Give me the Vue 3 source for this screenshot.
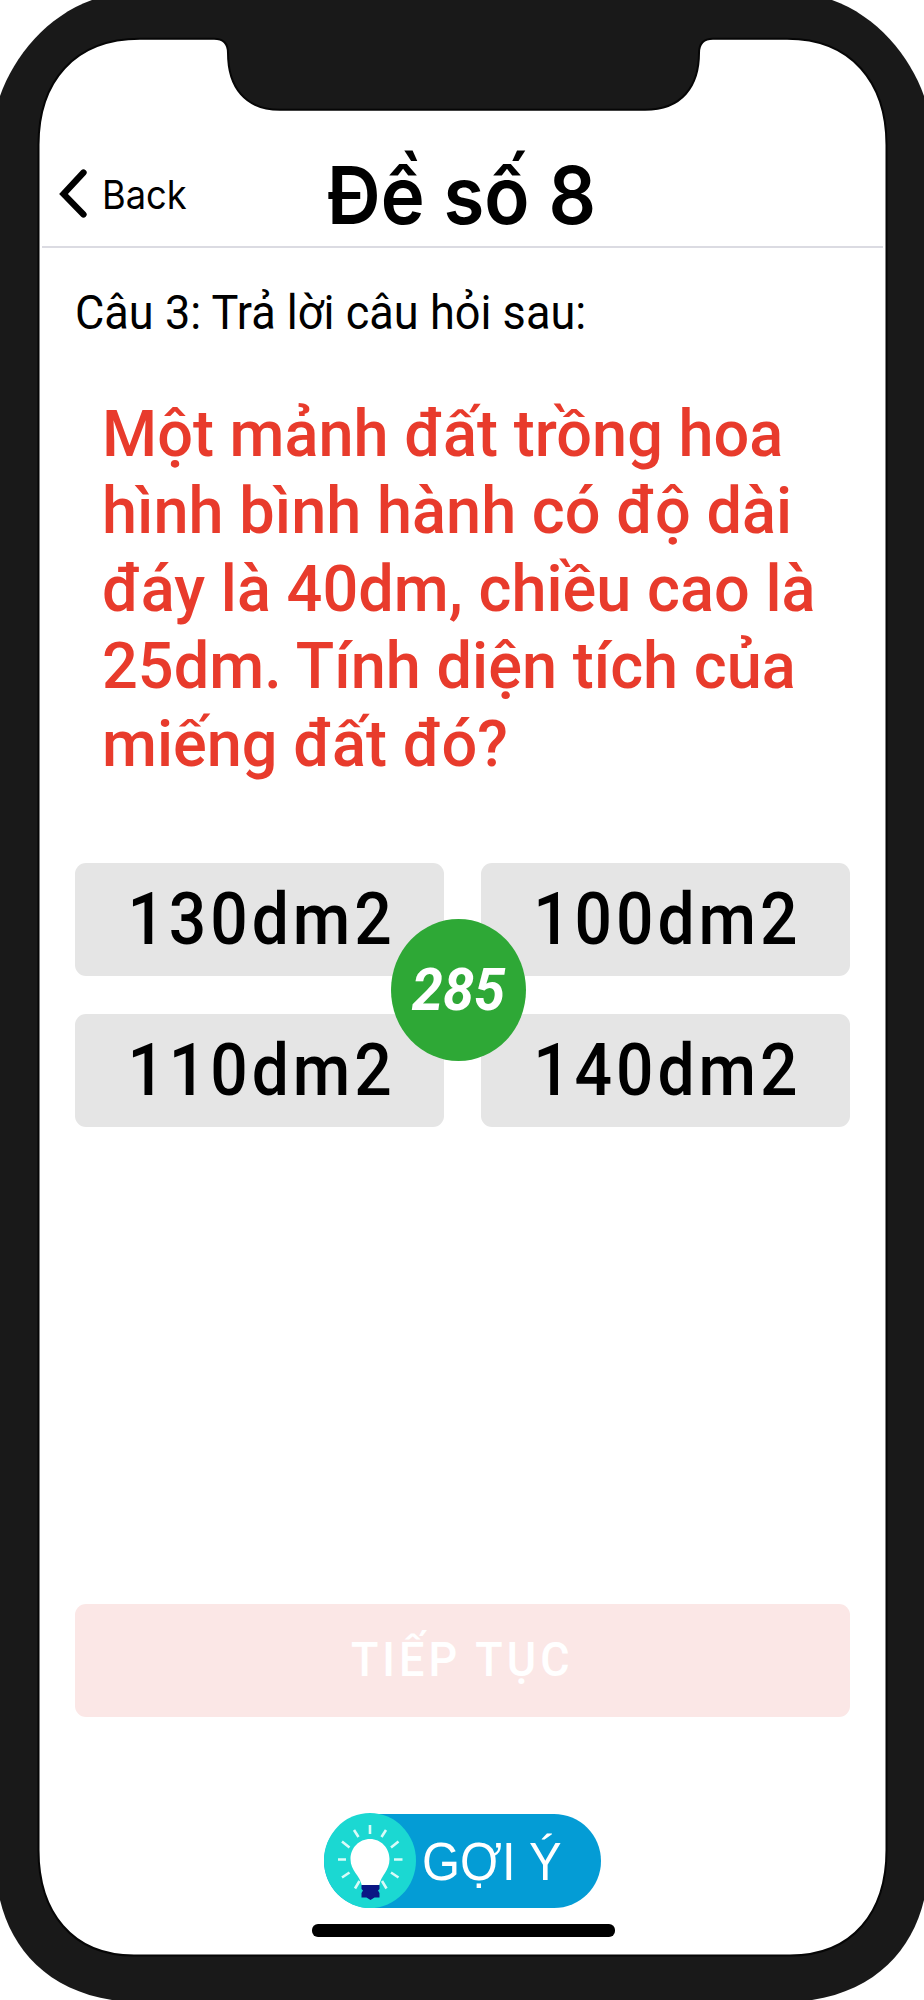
<script setup>
const questionLines = [
  'Một mảnh đất trồng hoa',
  'hình bình hành có độ dài',
  'đáy là 40dm, chiều cao là',
  '25dm. Tính diện tích của',
  'miếng đất đó?',
]
const answers = ['130dm2', '100dm2', '110dm2', '140dm2']
const secondsLeft = 285
</script>

<template>
  <div class="phone">
    <svg class="frame" viewBox="0 0 924 2000" aria-hidden="true">
      <path
        fill="#191919"
        d="M0 96C14 56 47 16 92 0H832C877 16 910 56 924 96V1900C912 1950 876 1990 812 2000H112C48 1990 12 1950 0 1900Z"
      />
      <path
        fill="#fff"
        stroke="#060606"
        stroke-width="2"
        d="M38.500 145C38.500 82 74 38.800 140 38.800H214C223 38.800 228 43 228 53C228 87 245 109.800 280 109.800H645C682 109.800 699 86 699 53C699 43 704 38.800 713 38.800H787C851 38.800 886.500 82 886.500 145V1850C886.500 1912 853 1955.500 790 1955.500H134C72 1955.500 38.500 1912 38.500 1850Z"
      />
    </svg>
    <main class="screen">
      <header class="bar">
        <button class="back">
          <svg class="chevron" width="30" height="52" viewBox="0 0 30 52">
            <path d="M25.500 4.500L5.500 26L25.500 46.500" fill="none" stroke="#000" stroke-width="6.300" stroke-linecap="round" stroke-linejoin="miter" />
          </svg>
          <span class="back-label">Back</span>
        </button>
        <h1 class="title">Đề số 8</h1>
      </header>
      <p class="prompt">Câu 3: Trả lời câu hỏi sau:</p>
      <div class="question">
        <div v-for="line in questionLines" :key="line">{{ line }}</div>
      </div>
      <section class="answers">
        <button v-for="a in answers" :key="a" class="answer"><span>{{ a }}</span></button>
        <div class="timer"><span>{{ secondsLeft }}</span></div>
      </section>
      <button class="next"><span>TIẾP TỤC</span></button>
      <button class="hint">
        <svg class="bulb" width="92" height="95" viewBox="0 0 92 95">
          <ellipse cx="46" cy="47.500" rx="46" ry="47.500" fill="#1bd8d2" />
          <g stroke="#d9fbf8" stroke-width="2.600">
            <path d="M46 12V21M30 17L34.500 24M62 17L57.500 24M18 28.500L25.500 34.500M74.500 28.500L67 34.500M14 46.500H22M70 46.500H78.500M18 64.500L25.500 59.500M74.500 64.500L67 59.500M31 75.500L35.500 68M62.500 75.500L58 68" />
          </g>
          <path fill="#fff" d="M46 26C35 26 26.500 35 26.500 46C26.500 58 36 62 38 73H55C57 62 65.500 58 65.500 46C65.500 35 57 26 46 26Z" />
          <path fill="#0b1684" d="M37.500 72H55.500V76L54 77.500L55.500 80V84.500H50.500L46.500 87L42.500 84.500H37.500V80L39 77.500L37.500 76Z" />
        </svg>
        <span>GỢI Ý</span>
      </button>
      <div class="home"></div>
    </main>
  </div>
</template>

<style>
body {
  margin: 0;
  background: #fff;
}
</style>

<style scoped>
.phone {
  position: relative;
  width: 924px;
  height: 2000px;
  overflow: hidden;
  font-family: Roboto, "Liberation Sans", sans-serif;
  color: #000;
}
.frame {
  position: absolute;
  inset: 0;
  width: 924px;
  height: 2000px;
}
.screen {
  position: relative;
  box-sizing: border-box;
  height: 2000px;
  padding: 142px 40px 0 42px;
  display: flex;
  flex-direction: column;
  align-items: flex-start;
}
button {
  border: 0;
  padding: 0;
  background: none;
  font-family: inherit;
  color: inherit;
}
span,
h1,
.prompt {
  white-space: nowrap;
}
.bar {
  box-sizing: border-box;
  width: 841px;
  height: 106px;
  flex: none;
  display: flex;
  align-items: center;
  border-bottom: 2px solid #dbdbe2;
}
.back {
  display: flex;
  align-items: center;
  width: 285px;
  height: 106px;
  padding-left: 16px;
  gap: 14px;
  box-sizing: border-box;
}
.back-label {
  padding-top: 2px;
  font: 400 38px/44px Inter, sans-serif;
  transform: scale(0.955, 1.03);
  transform-origin: 0 50%;
}
.title {
  margin: 0;
  padding-top: 1px;
  font: 600 80px/106px Inter, sans-serif;
  transform: scaleX(0.93);
  transform-origin: 0 50%;
}
.prompt {
  margin: 37px 0 0 33px;
  flex: none;
  font-size: 45px;
  line-height: 56px;
  transform: scale(1.002, 1.05);
  transform-origin: 0 50%;
}
.question {
  flex: none;
  margin: 53.500px 0 0 60px;
  height: 388px;
  font-size: 62px;
  font-weight: 500;
  line-height: 77.600px;
  color: #e83b2c;
  white-space: nowrap;
}
.question div {
  transform: scale(1.017, 1.05);
  transform-origin: 0 50%;
}
.answers {
  position: relative;
  flex: none;
  margin: 80px 0 0 33px;
  width: 774.500px;
  display: grid;
  grid-template-columns: 369px 368.500px;
  grid-auto-rows: 113px;
  gap: 38px 37px;
}
.answer {
  background: #e5e5e5;
  border-radius: 11px;
  display: flex;
  align-items: center;
  justify-content: center;
}
.answer span {
  padding-left: 4px;
  font-size: 66px;
  font-weight: 500;
  line-height: 113px;
  letter-spacing: 3.900px;
  transform: scaleY(1.085);
}
.timer {
  position: absolute;
  left: 316px;
  top: 56px;
  width: 135px;
  height: 142px;
  border-radius: 50%;
  background: #2ea836;
  color: #fff;
  display: flex;
  align-items: center;
  justify-content: center;
}
.timer span {
  font-size: 56px;
  font-weight: 700;
  font-style: italic;
  transform: scaleY(1.05);
}
.next {
  flex: none;
  margin: 477px 0 0 33px;
  width: 774.500px;
  height: 113px;
  border-radius: 11px;
  background: #fbe7e6;
  color: #fff;
  display: flex;
  align-items: center;
  justify-content: center;
}
.next span {
  font-size: 45px;
  font-weight: 500;
  letter-spacing: 4px;
  padding-bottom: 1px;
  transform: scaleY(1.05);
}
.hint {
  flex: none;
  margin: 97px 0 0 282px;
  width: 277px;
  height: 94.500px;
  border-radius: 47.500px;
  background: #049cd5;
  color: #fff;
  display: flex;
  align-items: center;
}
.bulb {
  flex: none;
}
.hint span {
  margin-left: 6px;
  font-family: "Liberation Sans", sans-serif;
  font-size: 54px;
  line-height: 94px;
  transform: scaleX(0.905);
  transform-origin: 0 50%;
}
.home {
  flex: none;
  margin: 16px 0 0 269.500px;
  width: 303px;
  height: 12.500px;
  border-radius: 6px;
  background: #000;
}
</style>
